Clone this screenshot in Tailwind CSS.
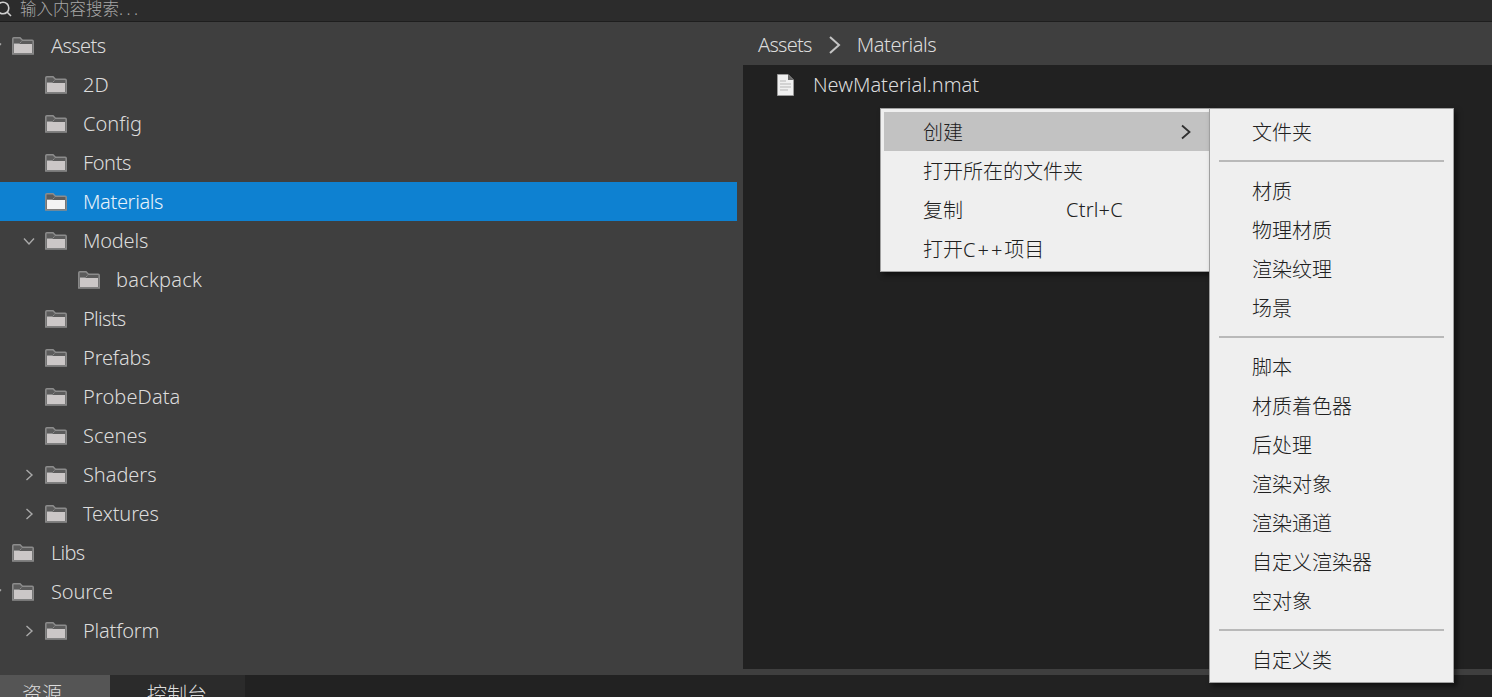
<!DOCTYPE html>
<html lang="zh-CN">
<head>
    <meta charset="UTF-8">
    <title>Assets</title>
    <script src="https://cdn.jsdelivr.net/npm/@tailwindcss/browser@4"></script>
</head>
<body class="relative w-[1492px] h-[697px] overflow-hidden bg-[#222222] text-[20px] text-[#dcdcdc] font-['Noto_Sans','Noto_Sans_CJK_SC',sans-serif] font-light">
    <svg class="hidden">
        <symbol id="folder" viewBox="0 0 22 18">
            <path d="M.8 17V1.800C.8 1.200 1.200.8 1.800.8H8L10.500 3.300H20.200C20.800 3.300 21.200 3.700 21.200 4.300V17Z" fill="#5c5c5c" stroke="#8c8c8c" stroke-width="1.500"/>
            <path d="M2 7H20V16H2Z" fill="currentColor"/>
            <path d="M2 6.500H7.500L9.500 4.500" fill="none" stroke="#8c8c8c"/>
        </symbol>
        <symbol id="right" viewBox="0 0 12 12">
            <path d="M3.500 1L9 6L3.500 11" fill="none" stroke="currentColor" stroke-width="1.400"/>
        </symbol>
        <symbol id="down" viewBox="0 0 12 12">
            <path d="M1 3.500L6 9L11 3.500" fill="none" stroke="currentColor" stroke-width="1.400"/>
        </symbol>
    </svg>

    <!-- search -->
    <div class="flex items-center h-[22px] bg-[#2c2c2c] border-b border-[#1e1e1e] text-[16.5px] text-[#a8a8a8] leading-none">
        <svg class="w-[16px] h-[16px] ml-[-4px] mt-[-3px] shrink-0" viewBox="0 0 16 16" fill="none" stroke="#d0d0d0" stroke-width="1.600"><circle cx="7" cy="7" r="5.800"/><path d="M11 11L15 15"/></svg>
        <span class="ml-[8px] mt-[-3px]">输入内容搜索<span class="tracking-[3.500px]">...</span></span>
    </div>

    <div class="flex h-[653px]">
        <!-- tree -->
        <div class="w-[737px] pt-[4px] bg-[#3f3f3f] shrink-0">
            <div class="flex items-center h-[39px]"><div class="w-[24px] ml-[-12px] pl-[2px] text-[#a9a9a9]"><svg class="w-[12px] h-[12px]"><use href="#down"/></svg></div><svg class="w-[22px] h-[18px] text-[#cbc7c7]"><use href="#folder"/></svg><span class="ml-[17px] tracking-[-0.6px]">Assets</span></div>
            <div class="flex items-center h-[39px]"><div class="w-[24px] ml-[21px] pl-[2px]"></div><svg class="w-[22px] h-[18px] text-[#cbc7c7]"><use href="#folder"/></svg><span class="ml-[16px]">2D</span></div>
            <div class="flex items-center h-[39px]"><div class="w-[24px] ml-[21px] pl-[2px]"></div><svg class="w-[22px] h-[18px] text-[#cbc7c7]"><use href="#folder"/></svg><span class="ml-[16px]">Config</span></div>
            <div class="flex items-center h-[39px]"><div class="w-[24px] ml-[21px] pl-[2px]"></div><svg class="w-[22px] h-[18px] text-[#cbc7c7]"><use href="#folder"/></svg><span class="ml-[16px] tracking-[-0.4px]">Fonts</span></div>
            <div class="flex items-center h-[39px] bg-[#0e81d1] text-[#e8f2fa]"><div class="w-[24px] ml-[21px] pl-[2px]"></div><svg class="w-[22px] h-[18px] text-[#f4f4f4]"><use href="#folder"/></svg><span class="ml-[16px] tracking-[-0.35px]">Materials</span></div>
            <div class="flex items-center h-[39px]"><div class="w-[24px] ml-[21px] pl-[2px] text-[#a9a9a9]"><svg class="w-[12px] h-[12px]"><use href="#down"/></svg></div><svg class="w-[22px] h-[18px] text-[#cbc7c7]"><use href="#folder"/></svg><span class="ml-[16px] tracking-[-0.2px]">Models</span></div>
            <div class="flex items-center h-[39px]"><div class="w-[24px] ml-[54px] pl-[2px]"></div><svg class="w-[22px] h-[18px] text-[#cbc7c7]"><use href="#folder"/></svg><span class="ml-[16px] tracking-[0.25px]">backpack</span></div>
            <div class="flex items-center h-[39px]"><div class="w-[24px] ml-[21px] pl-[2px]"></div><svg class="w-[22px] h-[18px] text-[#cbc7c7]"><use href="#folder"/></svg><span class="ml-[16px] tracking-[-0.7px]">Plists</span></div>
            <div class="flex items-center h-[39px]"><div class="w-[24px] ml-[21px] pl-[2px]"></div><svg class="w-[22px] h-[18px] text-[#cbc7c7]"><use href="#folder"/></svg><span class="ml-[16px] tracking-[-0.15px]">Prefabs</span></div>
            <div class="flex items-center h-[39px]"><div class="w-[24px] ml-[21px] pl-[2px]"></div><svg class="w-[22px] h-[18px] text-[#cbc7c7]"><use href="#folder"/></svg><span class="ml-[16px] tracking-[0.1px]">ProbeData</span></div>
            <div class="flex items-center h-[39px]"><div class="w-[24px] ml-[21px] pl-[2px]"></div><svg class="w-[22px] h-[18px] text-[#cbc7c7]"><use href="#folder"/></svg><span class="ml-[16px]">Scenes</span></div>
            <div class="flex items-center h-[39px]"><div class="w-[24px] ml-[21px] pl-[2px] text-[#a9a9a9]"><svg class="w-[12px] h-[12px]"><use href="#right"/></svg></div><svg class="w-[22px] h-[18px] text-[#cbc7c7]"><use href="#folder"/></svg><span class="ml-[16px] tracking-[-0.05px]">Shaders</span></div>
            <div class="flex items-center h-[39px]"><div class="w-[24px] ml-[21px] pl-[2px] text-[#a9a9a9]"><svg class="w-[12px] h-[12px]"><use href="#right"/></svg></div><svg class="w-[22px] h-[18px] text-[#cbc7c7]"><use href="#folder"/></svg><span class="ml-[16px] tracking-[-0.1px]">Textures</span></div>
            <div class="flex items-center h-[39px]"><div class="w-[24px] ml-[-12px] pl-[2px]"></div><svg class="w-[22px] h-[18px] text-[#cbc7c7]"><use href="#folder"/></svg><span class="ml-[17px] tracking-[-0.7px]">Libs</span></div>
            <div class="flex items-center h-[39px]"><div class="w-[24px] ml-[-12px] pl-[2px] text-[#a9a9a9]"><svg class="w-[12px] h-[12px]"><use href="#down"/></svg></div><svg class="w-[22px] h-[18px] text-[#cbc7c7]"><use href="#folder"/></svg><span class="ml-[17px] tracking-[-0.15px]">Source</span></div>
            <div class="flex items-center h-[39px]"><div class="w-[24px] ml-[21px] pl-[2px] text-[#a9a9a9]"><svg class="w-[12px] h-[12px]"><use href="#right"/></svg></div><svg class="w-[22px] h-[18px] text-[#cbc7c7]"><use href="#folder"/></svg><span class="ml-[16px] tracking-[-0.2px]">Platform</span></div>
        </div>

        <!-- splitter + files -->
        <div class="flex-1 flex flex-col bg-[#3f3f3f]">
            <div class="flex items-center h-[43px] pt-[2px] pl-[21px] shrink-0">
                <span class="tracking-[-0.75px]">Assets</span>
                <svg class="w-[14px] h-[18px] ml-[16px] mr-[15px] text-[#c4c4c4]" viewBox="0 0 14 18"><path d="M2 1L11 9L2 17" fill="none" stroke="currentColor" stroke-width="2"/></svg>
                <span class="tracking-[-0.4px]">Materials</span>
            </div>
            <div class="flex-1 ml-[6px] bg-[#212121] mb-[6px]">
                <div class="flex items-center h-[39px] pl-[34px]">
                    <svg class="w-[17px] h-[22px] shrink-0" viewBox="0 0 17 22"><path d="M.5.500H11L16.500 6V21.500H.5Z" fill="#f0f0f0" stroke="#9a9a9a"/><path d="M11 .5V6H16.500Z" fill="#6a6a6a"/><path d="M3 7H9M3 10H14M3 13H14M3 16H11" stroke="#b5b5b5"/></svg>
                    <span class="ml-[19px]">NewMaterial.nmat</span>
                </div>
            </div>
        </div>
    </div>

    <!-- tabs -->
    <div class="flex h-[22px] bg-[#222222]">
        <div class="w-[110px] pl-[22px] pt-[6px] bg-[#555555] leading-[28px]">资源</div>
        <div class="w-[135px] pl-[37px] pt-[6px] bg-[#2b2b2b] leading-[28px]">控制台</div>
    </div>

    <!-- context menu -->
    <div class="absolute left-[880px] top-[108px] w-[330px] h-[164px] py-[3px] pl-[3px] bg-[#efefef] border border-[#a0a0a0] text-[#202020] shadow-[3px_3px_5px_rgba(0,0,0,0.5)]">
        <div class="flex items-center justify-between h-[39px] pl-[39px] pr-[17px] bg-[#c2c2c2]">
            <span class="pt-[2px]">创建</span>
            <svg class="w-[12px] h-[16px]" viewBox="0 0 12 16"><path d="M2 1.500L9.500 8L2 14.500" fill="none" stroke="#303030" stroke-width="1.800"/></svg>
        </div>
        <div class="flex items-center h-[39px] pl-[39px] pt-[2px]">打开所在的文件夹</div>
        <div class="flex items-center h-[39px] pl-[39px]"><span class="w-[143px] pt-[2px]">复制</span><span class="tracking-[0.2px]">Ctrl+C</span></div>
        <div class="flex items-center h-[39px] pl-[39px] pt-[2px]">打开<span class="tracking-[2px]">C++</span>项目</div>
    </div>

    <!-- create submenu -->
    <div class="absolute left-[1209px] top-[108px] w-[245px] h-[575px] pt-[3px] bg-[#efefef] border border-[#a0a0a0] text-[#202020] shadow-[3px_3px_5px_rgba(0,0,0,0.5)]">
        <div class="flex items-center h-[39px] pl-[42px] pt-[2px]">文件夹</div>
        <div class="flex items-center h-[20px] px-[9px]"><div class="w-full h-[2px] bg-[#b9b9b9]"></div></div>
        <div class="flex items-center h-[39px] pl-[42px] pt-[2px]">材质</div>
        <div class="flex items-center h-[39px] pl-[42px] pt-[2px]">物理材质</div>
        <div class="flex items-center h-[39px] pl-[42px] pt-[2px]">渲染纹理</div>
        <div class="flex items-center h-[39px] pl-[42px] pt-[2px]">场景</div>
        <div class="flex items-center h-[20px] px-[9px]"><div class="w-full h-[2px] bg-[#b9b9b9]"></div></div>
        <div class="flex items-center h-[39px] pl-[42px] pt-[2px]">脚本</div>
        <div class="flex items-center h-[39px] pl-[42px] pt-[2px]">材质着色器</div>
        <div class="flex items-center h-[39px] pl-[42px] pt-[2px]">后处理</div>
        <div class="flex items-center h-[39px] pl-[42px] pt-[2px]">渲染对象</div>
        <div class="flex items-center h-[39px] pl-[42px] pt-[2px]">渲染通道</div>
        <div class="flex items-center h-[39px] pl-[42px] pt-[2px]">自定义渲染器</div>
        <div class="flex items-center h-[39px] pl-[42px] pt-[2px]">空对象</div>
        <div class="flex items-center h-[20px] px-[9px]"><div class="w-full h-[2px] bg-[#b9b9b9]"></div></div>
        <div class="flex items-center h-[39px] pl-[42px] pt-[2px]">自定义类</div>
    </div>
</body>
</html>
